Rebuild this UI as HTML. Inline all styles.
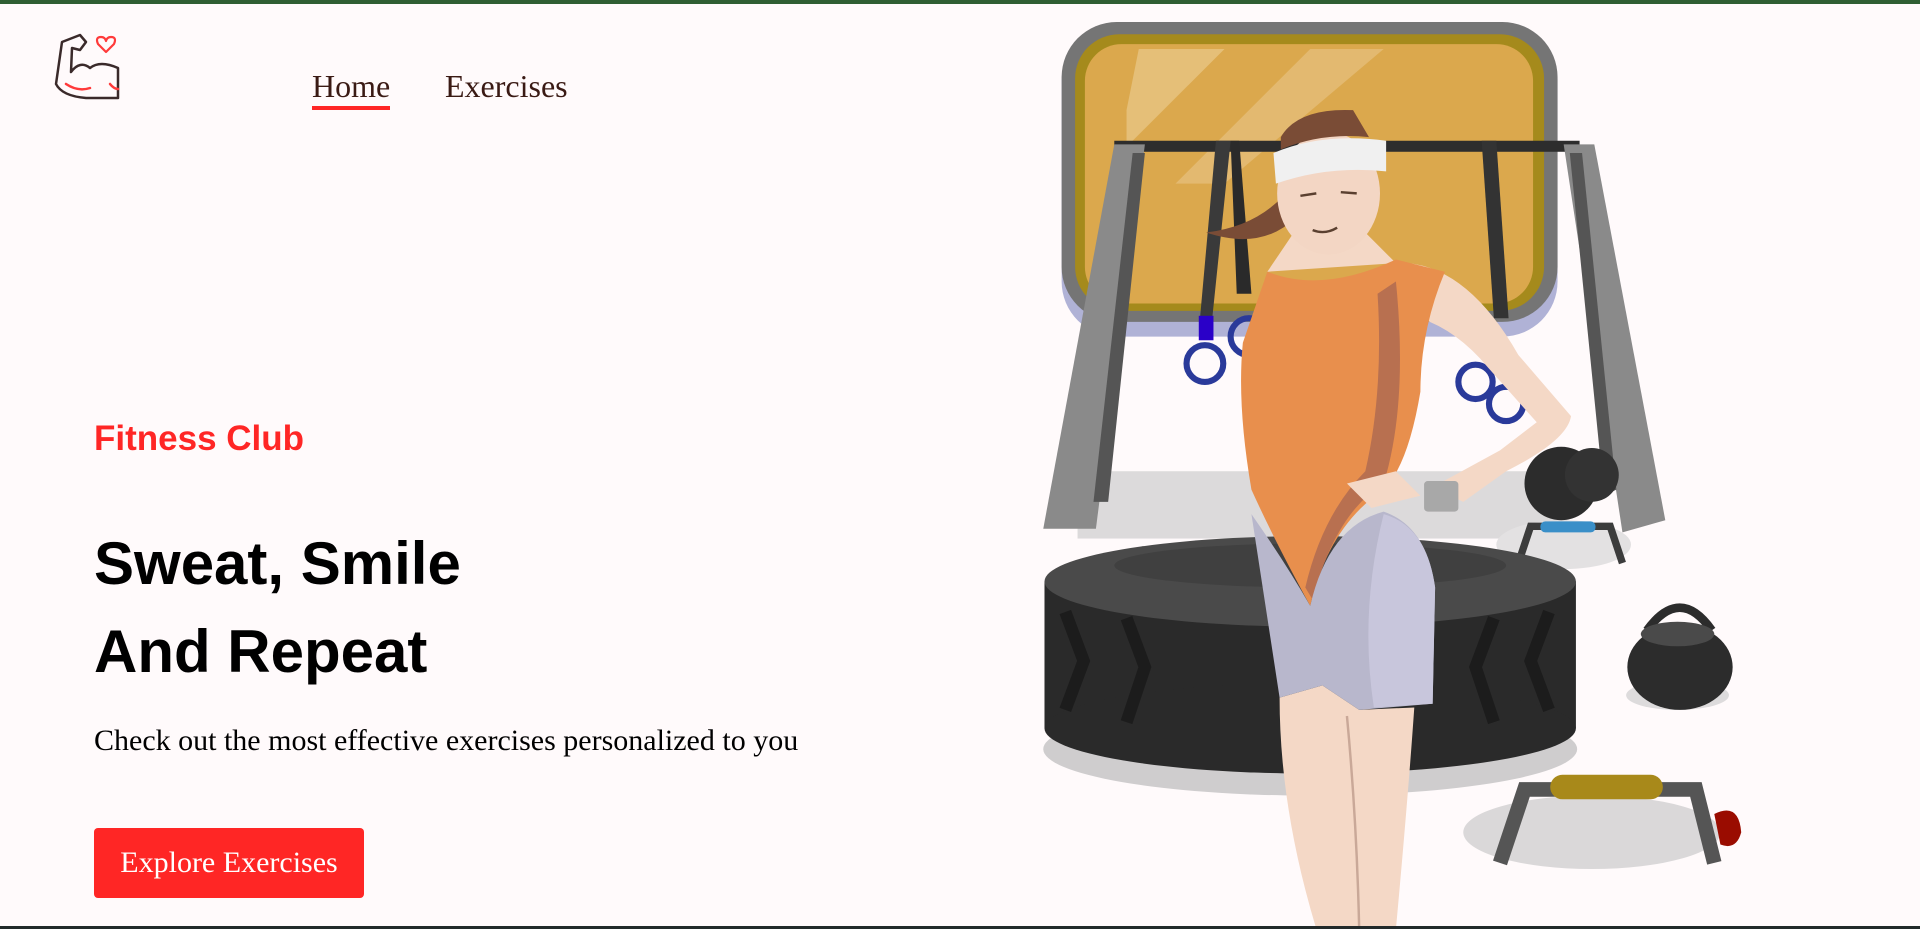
<!DOCTYPE html>
<html><head><meta charset="utf-8"><style>
html,body{margin:0;padding:0}
body{width:1920px;height:929px;background:#fffafb;position:relative;overflow:hidden;font-family:"Liberation Serif",serif}
.top{position:absolute;left:0;top:0;width:1920px;height:4px;background:#2f5e33}
.bot{position:absolute;left:0;top:926px;width:1920px;height:3px;background:#222a2a}
.nav a{position:absolute;top:66px;font-size:32px;color:#3a1a14;text-decoration:none;line-height:40px}
.home{left:312px;border-bottom:4px solid #ff2625;padding-bottom:0}
.ex{left:445px}
.h2{position:absolute;left:94px;top:419px;font:bold 35px "Liberation Sans",sans-serif;color:#ff2625}
.h1{position:absolute;left:94px;top:520px;font:bold 60px/88px "Liberation Sans",sans-serif;color:#000}
.p{position:absolute;left:94px;top:724px;font-size:30px;color:#000}
.btn{position:absolute;left:94px;top:828px;width:270px;height:70px;background:#ff2625;border-radius:4px;color:#fff;font-size:30px;text-align:center;line-height:70px}
svg.art{position:absolute;left:0;top:0}
</style></head><body>
<div class="top"></div>
<svg style="position:absolute;left:52px;top:32px" width="70" height="70" viewBox="0 0 70 70" fill="none" stroke-linecap="round" stroke-linejoin="round">
<path d="M4 52 L10 10 L28 3 L34 10 L28 18 L20 16 L19 40 Q28 28 38 36 Q48 28 66 36 L66 66 L34 66 Q10 64 4 52Z" stroke="#3a2a2a" stroke-width="2.5"/>
<path d="M14 52 Q26 60 38 56" stroke="#ff3a3a" stroke-width="2.5"/>
<path d="M58 52 Q62 57 66 57" stroke="#ff3a3a" stroke-width="2.5"/>
<path d="M54 20 L46 12 Q43 5 49 5 Q53 5 54 9 Q55 5 59 5 Q65 5 62 12Z" stroke="#ff3a3a" stroke-width="2.2"/>
</svg>
<div class="nav"><a class="home">Home</a><a class="ex">Exercises</a></div>
<div class="h2">Fitness Club</div>
<div class="h1">Sweat, Smile<br>And Repeat</div>
<div class="p">Check out the most effective exercises personalized to you</div>
<div class="btn">Explore Exercises</div>
<svg class="art" width="1920" height="929" viewBox="0 0 1568 759" preserveAspectRatio="none">
<rect x="880" y="385" width="400" height="55" fill="#dcdadb"/>
<ellipse cx="1070" cy="612" rx="218" ry="38" fill="#cfcdce"/>
<ellipse cx="1300" cy="680" rx="105" ry="30" fill="#dad8d9"/>
<ellipse cx="1277" cy="445" rx="55" ry="20" fill="#e3e1e2"/>
<ellipse cx="1370" cy="568" rx="42" ry="12" fill="#dddbdc"/>
<rect x="867" y="20" width="405" height="255" rx="45" fill="#b0b2d6"/>
<rect x="867" y="18" width="405" height="245" rx="45" fill="#757575"/>
<rect x="878" y="28" width="383" height="226" rx="36" fill="#a58a1c"/>
<rect x="886" y="36" width="366" height="212" rx="30" fill="#dba84d"/>
<polygon points="930,40 1000,40 920,120 920,90" fill="#e5bf78"/>
<polygon points="1070,40 1130,40 1000,150 960,150" fill="#e3b970"/>
<rect x="910" y="115" width="380" height="9" fill="#2d2d2d"/>
<polygon points="993,115 1005,115 990,260 980,260" fill="#3a3a3a"/>
<polygon points="1005,115 1012,115 1022,240 1010,240" fill="#2a2a2a"/>
<rect x="979" y="258" width="12" height="20" fill="#2a00c8"/>
<circle cx="984" cy="297" r="15" fill="none" stroke="#2a3a9a" stroke-width="5"/>
<circle cx="1020" cy="275" r="15" fill="none" stroke="#2a3a9a" stroke-width="5"/>
<polygon points="1210,115 1222,115 1232,260 1220,260" fill="#333"/>
<circle cx="1205" cy="312" r="14" fill="none" stroke="#2a3a9a" stroke-width="5"/>
<circle cx="1230" cy="330" r="14" fill="none" stroke="#2a3a9a" stroke-width="5"/>
<polygon points="910,118 935,118 895,432 852,432" fill="#8a8a8a"/>
<polygon points="925,125 935,125 905,410 893,410" fill="#555"/>
<polygon points="1277,118 1302,118 1360,425 1325,435" fill="#8a8a8a"/>
<polygon points="1282,125 1292,125 1320,400 1310,405" fill="#555"/>
<circle cx="1275" cy="395" r="30" fill="#2c2c2c"/>
<circle cx="1300" cy="388" r="22" fill="#333"/>
<path d="M1240 460 L1250 430 L1315 430 L1325 460" fill="none" stroke="#3c3c3c" stroke-width="6"/>
<rect x="1258" y="426" width="45" height="9" rx="4" fill="#3a8fc8"/>
<path d="M1345 515 Q1372 478 1398 515" fill="none" stroke="#2c2c2c" stroke-width="7"/>
<ellipse cx="1372" cy="545" rx="43" ry="35" fill="#2c2c2c"/>
<ellipse cx="1370" cy="518" rx="30" ry="10" fill="#4a4a4a"/>
<path d="M1225 705 L1245 645 L1385 645 L1400 705" fill="none" stroke="#555" stroke-width="12"/>
<rect x="1266" y="633" width="92" height="20" rx="10" fill="#a8891a"/>
<path d="M1400 665 Q1420 655 1422 680 Q1418 695 1405 690Z" fill="#9a0c00"/>
<!-- tire -->
<rect x="853" y="475" width="434" height="120" fill="#2a2a2a"/>
<ellipse cx="1070" cy="595" rx="217" ry="37" fill="#2a2a2a"/>
<path d="M870 500 L885 540 L870 580 M920 505 L935 545 L920 590 M1220 505 L1205 545 L1220 590 M1265 500 L1250 540 L1265 580" stroke="#1c1c1c" stroke-width="10" fill="none"/>
<ellipse cx="1070" cy="475" rx="217" ry="37" fill="#4a4a4a"/>
<ellipse cx="1070" cy="462" rx="160" ry="18" fill="#404040"/>
<!-- woman -->
<path d="M1045 570 L1080 560 L1110 580 L1155 578 Q1150 650 1140 759 L1075 759 Q1045 660 1045 570Z" fill="#f4d8c6"/>
<path d="M1100 585 Q1108 670 1110 759" stroke="#c9a898" stroke-width="2" fill="none"/>
<path d="M1060 185 L1110 185 L1140 215 L1035 222Z" fill="#f4d8c6"/>
<path d="M1150 215 Q1200 220 1240 290 L1283 340 Q1280 360 1230 385 L1195 410 L1170 398 L1225 368 L1255 345 L1215 300 Q1190 270 1160 260Z" fill="#f4d8c6"/>
<path d="M1035 222 Q1080 240 1140 212 L1180 222 Q1160 270 1160 320 Q1150 380 1130 400 Q1085 430 1070 495 Q1040 440 1022 400 Q1010 330 1015 280 Z" fill="#e88f4d"/>
<path d="M1140 230 Q1150 330 1130 395 Q1090 420 1072 490 L1066 480 Q1080 420 1115 385 Q1130 320 1125 240Z" fill="#b87050"/>
<path d="M1022 420 Q1050 460 1070 495 Q1085 430 1130 418 Q1165 430 1172 480 L1170 575 L1110 580 L1080 560 L1045 570 Z" fill="#b8b7cc"/>
<path d="M1130 420 Q1165 430 1172 480 L1170 575 L1122 578 Q1110 500 1130 420Z" fill="#c8c6dc"/>
<path d="M1100 395 L1140 385 L1160 405 L1120 415Z" fill="#f4d8c6"/>
<rect x="1163" y="393" width="28" height="25" rx="3" fill="#a8a8a8"/>
<path d="M1048 160 Q1025 185 985 190 Q1030 205 1058 178Z" fill="#7a4c36"/>
<ellipse cx="1085" cy="158" rx="42" ry="50" fill="#f3d6c4"/>
<path d="M1046 112 Q1060 88 1105 90 L1118 112 Q1080 108 1046 122Z" fill="#7a4c36"/>
<path d="M1040 125 Q1080 108 1132 115 L1132 140 Q1085 135 1042 150Z" fill="#f0f0f0"/>
<path d="M1062 160 L1075 158 M1095 157 L1108 158 M1072 188 Q1082 192 1092 186" stroke="#5a4030" stroke-width="2" fill="none"/>
</svg>
<div class="bot"></div>
</body></html>
